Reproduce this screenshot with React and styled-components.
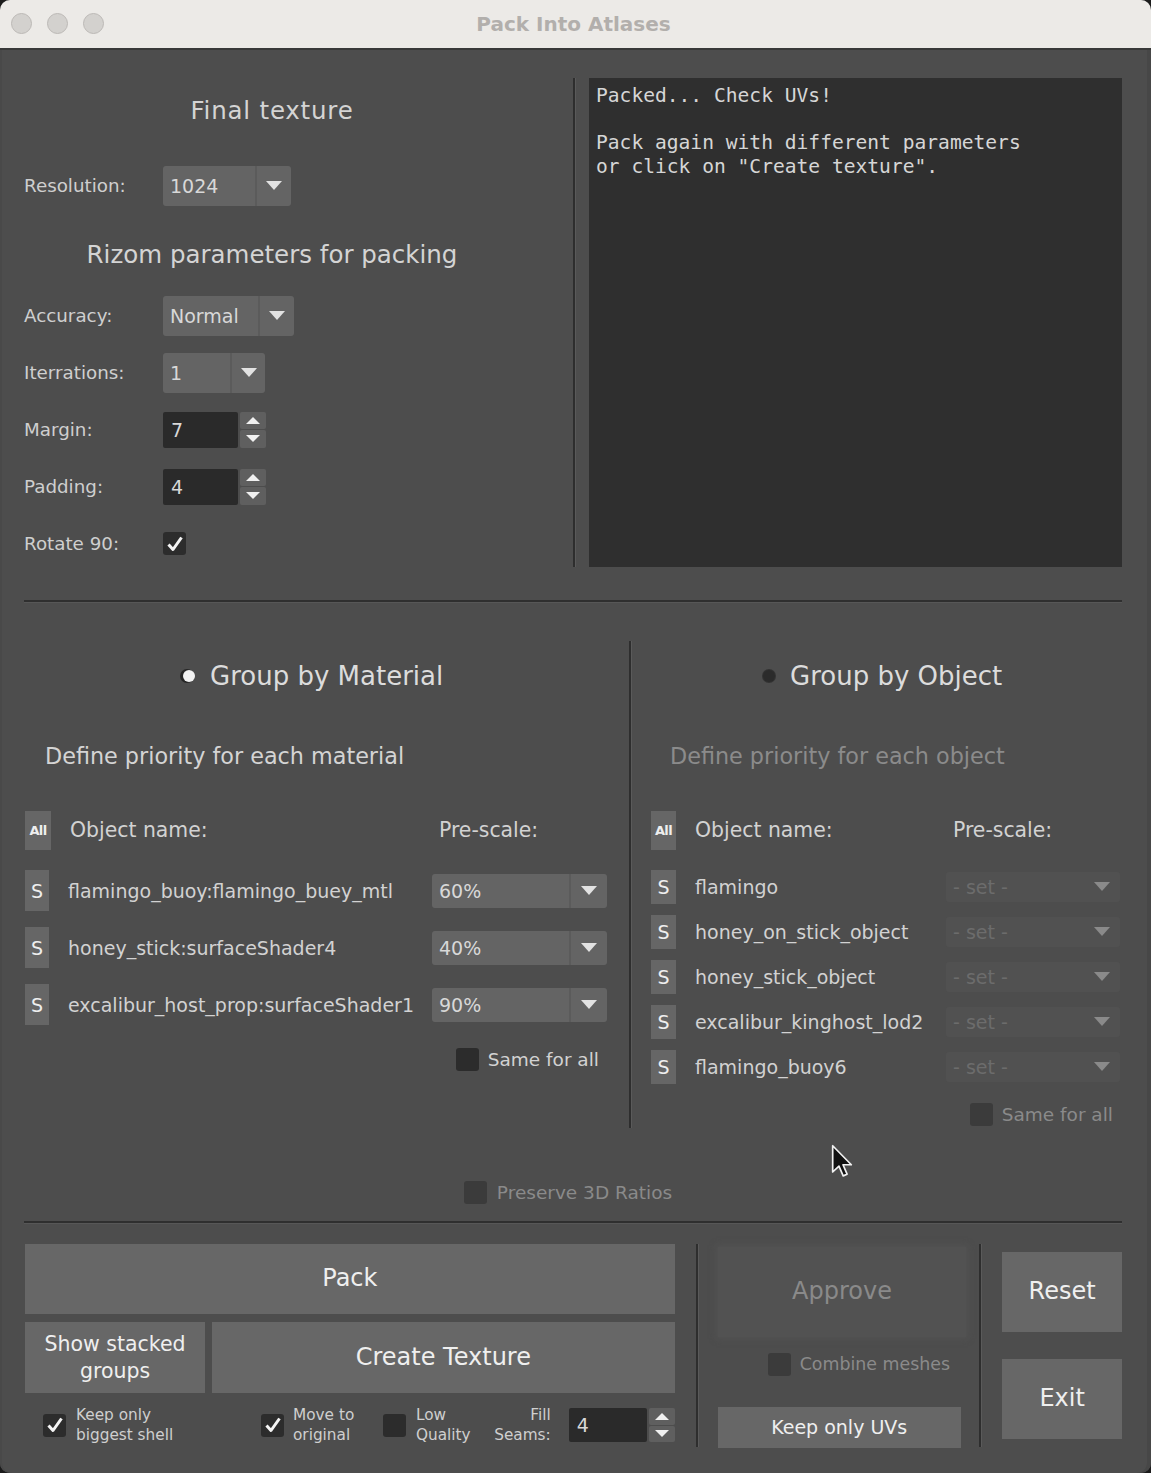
import React from "react";
import styled, { createGlobalStyle } from "styled-components";

const GlobalStyle = createGlobalStyle`
  html, body {
    margin: 0;
    padding: 0;
    background: #1c1c1c;
  }
  body {
    font-family: "DejaVu Sans", "Noto Sans", sans-serif;
    color: #d2d2d2;
  }
`;

const Window = styled.div`
  position: relative;
  width: 1151px;
  height: 1473px;
  background: #4d4d4d;
  border-radius: 10px;
  overflow: hidden;
  display: flex;
  flex-direction: column;
  box-shadow: inset -4px 0 0 #474747, inset 2px 0 0 #494949;
`;

const TitleBar = styled.div`
  position: relative;
  height: 48px;
  flex-shrink: 0;
  background: #eceae7;
  border-bottom: 2px solid #393939;
  display: flex;
  align-items: center;
  justify-content: center;
`;

const Lights = styled.div`
  position: absolute;
  left: 11px;
  top: 13px;
  display: flex;
  gap: 15px;
`;

const Light = styled.span`
  width: 19px;
  height: 19px;
  border-radius: 50%;
  background: #d3d1ce;
  border: 1px solid #bcb9b6;
`;

const Title = styled.div`
  font-weight: bold;
  font-size: 20px;
  color: #b2afac;
  padding-right: 4px;
`;

const Body = styled.div`
  flex: 1;
  display: flex;
  flex-direction: column;
  padding: 28px 29px 0 24px;
`;

/* ---------- top area ---------- */

const Top = styled.div`
  display: flex;
  height: 494px;
  flex-shrink: 0;
`;

const LeftForm = styled.div`
  width: 549px;
  display: flex;
  flex-direction: column;
`;

const Heading = styled.div`
  width: 496px;
  height: 50px;
  flex-shrink: 0;
  margin-top: ${(p) => p.$top}px;
  display: flex;
  align-items: center;
  justify-content: center;
  font-size: 24.5px;
  letter-spacing: ${(p) => p.$ls || 0}px;
  color: #d4d4d4;
`;

const FormRow = styled.div`
  height: 57px;
  flex-shrink: 0;
  margin-top: ${(p) => p.$top || 0}px;
  display: flex;
  align-items: center;
`;

const Label = styled.div`
  width: 139px;
  font-size: 18.3px;
  color: #cfcfcf;
`;

const VSep = styled.div`
  width: 3px;
  flex-shrink: 0;
  height: ${(p) => (p.$h ? `${p.$h}px` : "auto")};
  align-self: ${(p) => (p.$h ? "flex-start" : "stretch")};
  margin: ${(p) => p.$margin || "0"};
  background: linear-gradient(to right, #2e2e2e 0 2px, #5a5a5a 2px);
`;

const Console = styled.div`
  flex: 1;
  height: 489px;
  margin-left: 13px;
  background: #2f2f2f;
  padding: 6px 7px;
  box-sizing: border-box;
  font-family: "DejaVu Sans Mono", "Liberation Mono", monospace;
  font-size: 19.6px;
  line-height: 23.5px;
  color: #d6d6d6;
  white-space: pre;
`;

const HSep = styled.div`
  height: 3px;
  flex-shrink: 0;
  margin-top: ${(p) => p.$top}px;
  background: linear-gradient(to bottom, #2f2f2f 0 2px, #575757 2px);
`;

/* ---------- controls ---------- */

const Dropdown = styled.div`
  width: ${(p) => p.$w}px;
  height: ${(p) => p.$h}px;
  display: flex;
  border-radius: 3px;
  background: ${(p) => (p.$disabled ? "#515151" : "#646464")};
  font-size: ${(p) => p.$fs || 19}px;
  color: ${(p) => (p.$disabled ? "#6c6c6c" : "#d8d8d8")};
`;

const DropValue = styled.div`
  flex: 1;
  display: flex;
  align-items: center;
  padding-left: 7px;
`;

const DropArrow = styled.div`
  width: ${(p) => p.$w || 34}px;
  display: flex;
  align-items: center;
  justify-content: center;
  border-left: 2px solid ${(p) => (p.$disabled ? "#515151" : "#5b5b5b")};
  &::after {
    content: "";
    border-left: 8px solid transparent;
    border-right: 8px solid transparent;
    border-top: 9px solid ${(p) => (p.$disabled ? "#8a8a8a" : "#e2e2e2")};
  }
`;

const Select = ({ value, w, h, fs, arrow, disabled }) => (
  <Dropdown $w={w} $h={h} $fs={fs} $disabled={disabled}>
    <DropValue>{value}</DropValue>
    <DropArrow $w={arrow} $disabled={disabled} />
  </Dropdown>
);

const SpinBox = styled.div`
  display: flex;
  height: ${(p) => p.$h}px;
  gap: 2px;
`;

const SpinInput = styled.div`
  width: ${(p) => p.$w}px;
  background: #2a2a2a;
  border-radius: 2px;
  display: flex;
  align-items: center;
  padding-left: 8px;
  box-sizing: border-box;
  font-size: 19px;
  color: #d8d8d8;
`;

const SpinArrows = styled.div`
  width: 26px;
  display: flex;
  flex-direction: column;
  gap: 1px;
`;

const SpinBtn = styled.div`
  flex: 1;
  background: #5f5f5f;
  border-radius: 2px;
  display: flex;
  align-items: center;
  justify-content: center;
  &::after {
    content: "";
    border-left: 7px solid transparent;
    border-right: 7px solid transparent;
    ${(p) => (p.$up ? "border-bottom" : "border-top")}: 7px solid #f0f0f0;
  }
`;

const Spinner = ({ value, w, h }) => (
  <SpinBox $h={h}>
    <SpinInput $w={w}>{value}</SpinInput>
    <SpinArrows>
      <SpinBtn $up />
      <SpinBtn />
    </SpinArrows>
  </SpinBox>
);

const Box = styled.div`
  width: 23px;
  height: 23px;
  flex-shrink: 0;
  border-radius: 3px;
  background: ${(p) => (p.$disabled ? "#3b3b3b" : "#2c2c2c")};
  display: flex;
  align-items: center;
  justify-content: center;
`;

const Check = ({ checked, disabled }) => (
  <Box $disabled={disabled}>
    {checked && (
      <svg width="18" height="18" viewBox="0 0 18 18">
        <path d="M2.5 9.5 L7 14.5 L15.5 2.5" fill="none" stroke="#f4f4f4" strokeWidth="3" strokeLinejoin="round" />
      </svg>
    )}
  </Box>
);

const CheckLine = styled.div`
  display: flex;
  align-items: center;
  gap: ${(p) => p.$gap || 9}px;
  font-size: ${(p) => p.$fs || 18.5}px;
  color: ${(p) => (p.$disabled ? "#8a8a8a" : "#d2d2d2")};
`;

/* ---------- group columns ---------- */

const Middle = styled.div`
  display: flex;
  height: 487px;
  flex-shrink: 0;
  margin-top: 38px;
`;

const GroupCol = styled.div`
  width: ${(p) => (p.$w ? `${p.$w}px` : "auto")};
  flex: ${(p) => (p.$w ? "none" : 1)};
  display: flex;
  flex-direction: column;
  padding-left: ${(p) => p.$pad}px;
  padding-right: ${(p) => p.$padR || 0}px;
  & > * {
    flex-shrink: 0;
  }
`;

const RadioRow = styled.div`
  height: 70px;
  display: flex;
  align-items: center;
  gap: 15px;
  padding-left: ${(p) => p.$indent}px;
  font-size: 26px;
  color: #dcdcdc;
`;

const Radio = styled.span`
  width: 12px;
  height: 12px;
  border-radius: 50%;
  background: ${(p) => (p.$on ? "#f2f2f2" : "#2b2b2b")};
  box-shadow: ${(p) => (p.$on ? "-2px 0 0 1px #262626" : "0 0 0 1px #333")};
`;

const SubTitle = styled.div`
  height: 90px;
  display: flex;
  align-items: center;
  padding-left: ${(p) => p.$indent}px;
  font-size: 22.3px;
  color: ${(p) => (p.$disabled ? "#8b8b8b" : "#d4d4d4")};
`;

const TableRow = styled.div`
  display: grid;
  grid-template-columns: ${(p) => p.$btn}px 1fr ${(p) => p.$drop}px;
  align-items: center;
  height: ${(p) => p.$h}px;
  margin-top: ${(p) => p.$top || 0}px;
`;

const SmallBtn = styled.div`
  height: ${(p) => p.$h}px;
  background: #666;
  display: flex;
  align-items: center;
  justify-content: center;
  font-size: ${(p) => (p.$all ? 13 : 19)}px;
  font-weight: ${(p) => (p.$all ? "bold" : "normal")};
  letter-spacing: ${(p) => (p.$all ? "-0.6px" : "0")};
  color: #eeeeee;
`;

const NameCell = styled.div`
  padding-left: 19px;
  font-size: ${(p) => p.$fs || 19}px;
  color: #d2d2d2;
  white-space: nowrap;
`;

const HeadCell = styled.div`
  padding-left: 7px;
  font-size: 20.4px;
  color: #d2d2d2;
`;

const SameRow = styled.div`
  height: ${(p) => p.$h}px;
  display: flex;
  align-items: center;
  justify-content: flex-end;
  padding-right: ${(p) => p.$right}px;
`;

const PreserveRow = styled.div`
  height: 58px;
  flex-shrink: 0;
  margin-top: 35px;
  display: flex;
  align-items: center;
  justify-content: center;
  padding-right: 10px;
`;

/* ---------- bottom area ---------- */

const Bottom = styled.div`
  display: flex;
  padding: 20px 0 0 1px;
`;

const BottomLeft = styled.div`
  width: 651px;
  display: flex;
  flex-direction: column;
`;

const BigBtn = styled.div`
  height: ${(p) => p.$h}px;
  width: ${(p) => (p.$w ? `${p.$w}px` : "auto")};
  margin-top: ${(p) => p.$top || 0}px;
  background: ${(p) => (p.$disabled ? "#525252" : "#676767")};
  box-shadow: ${(p) => (p.$disabled ? "0 0 6px 2px #525252" : "none")};
  display: flex;
  align-items: center;
  justify-content: center;
  text-align: center;
  font-size: ${(p) => p.$fs || 24}px;
  line-height: 1.3;
  color: ${(p) => (p.$disabled ? "#8a8a8a" : "#efefef")};
`;

const BtnPair = styled.div`
  display: grid;
  grid-template-columns: 180px 1fr;
  gap: 7px;
  margin-top: 8px;
`;

const Options = styled.div`
  display: flex;
  align-items: center;
  height: 40px;
  margin-top: 12px;
  padding-left: 18px;
`;

const Opt = styled.div`
  width: ${(p) => (p.$w ? `${p.$w}px` : "auto")};
  flex: ${(p) => (p.$w ? "none" : 1)};
`;

const SmallText = styled.div`
  font-size: 15.3px;
  line-height: 20px;
  color: #cfcfcf;
  text-align: ${(p) => (p.$right ? "right" : "left")};
  margin-right: ${(p) => (p.$right ? 18 : 0)}px;
`;

const BottomMid = styled.div`
  width: 249px;
  margin-left: 19px;
  display: flex;
  flex-direction: column;
`;

const CombineRow = styled.div`
  height: 54px;
  display: flex;
  align-items: center;
  padding-left: 50px;
`;

const BottomRight = styled.div`
  width: 120px;
  margin-left: 20px;
  display: flex;
  flex-direction: column;
  gap: 27px;
  padding-top: 8px;
`;

const Cursor = styled.svg`
  position: absolute;
  left: 831px;
  top: 1144px;
`;

const materials = [
  { name: "flamingo_buoy:flamingo_buey_mtl", scale: "60%" },
  { name: "honey_stick:surfaceShader4", scale: "40%" },
  { name: "excalibur_host_prop:surfaceShader1", scale: "90%" },
];

const objects = [
  "flamingo",
  "honey_on_stick_object",
  "honey_stick_object",
  "excalibur_kinghost_lod2",
  "flamingo_buoy6",
];

export default function App() {
  return (
    <>
      <GlobalStyle />
      <Window>
        <TitleBar>
          <Lights>
            <Light />
            <Light />
            <Light />
          </Lights>
          <Title>Pack Into Atlases</Title>
        </TitleBar>

        <Body>
          <Top>
            <LeftForm>
              <Heading $top={7} $ls={0.8}>
                Final texture
              </Heading>
              <FormRow $top={22}>
                <Label>Resolution:</Label>
                <Select value="1024" w={128} h={40} />
              </FormRow>
              <Heading $top={15}>Rizom parameters for packing</Heading>
              <FormRow $top={8}>
                <Label>Accuracy:</Label>
                <Select value="Normal" w={131} h={40} />
              </FormRow>
              <FormRow>
                <Label>Iterrations:</Label>
                <Select value="1" w={102} h={40} arrow={33} />
              </FormRow>
              <FormRow>
                <Label>Margin:</Label>
                <Spinner value="7" w={75} h={36} />
              </FormRow>
              <FormRow>
                <Label>Padding:</Label>
                <Spinner value="4" w={75} h={36} />
              </FormRow>
              <FormRow>
                <Label>Rotate 90:</Label>
                <Check checked />
              </FormRow>
            </LeftForm>
            <VSep $h={489} />
            <Console>{`Packed... Check UVs!

Pack again with different parameters
or click on "Create texture".`}</Console>
          </Top>

          <HSep $top={28} />

          <Middle>
            <GroupCol $w={604} $pad={1}>
              <RadioRow $indent={158}>
                <Radio $on />
                Group by Material
              </RadioRow>
              <SubTitle $indent={20}>Define priority for each material</SubTitle>
              <TableRow $btn={26} $drop={175} $h={40} $top={9} style={{ width: 582 }}>
                <SmallBtn $all $h={39}>All</SmallBtn>
                <NameCell $fs={20.4}>Object name:</NameCell>
                <HeadCell>Pre-scale:</HeadCell>
              </TableRow>
              {materials.map((m, i) => (
                <TableRow key={m.name} $btn={24} $drop={175} $h={57} $top={i === 0 ? 12 : 0} style={{ width: 582 }}>
                  <SmallBtn $h={41}>S</SmallBtn>
                  <NameCell>{m.name}</NameCell>
                  <Select value={m.scale} w={175} h={34} arrow={36} />
                </TableRow>
              ))}
              <SameRow $h={52} $right={30}>
                <CheckLine>
                  <Check />
                  Same for all
                </CheckLine>
              </SameRow>
            </GroupCol>

            <VSep />

            <GroupCol $pad={19} $padR={2}>
              <RadioRow $indent={112}>
                <Radio />
                Group by Object
              </RadioRow>
              <SubTitle $indent={19} $disabled>
                Define priority for each object
              </SubTitle>
              <TableRow $btn={25} $drop={174} $h={40} $top={9}>
                <SmallBtn $all $h={39}>All</SmallBtn>
                <NameCell $fs={20.4}>Object name:</NameCell>
                <HeadCell>Pre-scale:</HeadCell>
              </TableRow>
              {objects.map((o, i) => (
                <TableRow key={o} $btn={25} $drop={174} $h={45} $top={i === 0 ? 14 : 0}>
                  <SmallBtn $h={34}>S</SmallBtn>
                  <NameCell>{o}</NameCell>
                  <Select value="- set -" w={174} h={30} arrow={36} disabled />
                </TableRow>
              ))}
              <SameRow $h={50} $right={7}>
                <CheckLine $disabled>
                  <Check disabled />
                  Same for all
                </CheckLine>
              </SameRow>
            </GroupCol>
          </Middle>

          <PreserveRow>
            <CheckLine $disabled $gap={10}>
              <Check disabled />
              Preserve 3D Ratios
            </CheckLine>
          </PreserveRow>

          <HSep $top={0} />

          <Bottom>
            <BottomLeft>
              <BigBtn $h={70}>Pack</BigBtn>
              <BtnPair>
                <BigBtn $h={71} $fs={20.5}>
                  Show stacked
                  <br />
                  groups
                </BigBtn>
                <BigBtn $h={71}>Create Texture</BigBtn>
              </BtnPair>
              <Options>
                <Opt $w={218}>
                  <CheckLine $gap={10}>
                    <Check checked />
                    <SmallText>
                      Keep only
                      <br />
                      biggest shell
                    </SmallText>
                  </CheckLine>
                </Opt>
                <Opt $w={122}>
                  <CheckLine>
                    <Check checked />
                    <SmallText>
                      Move to
                      <br />
                      original
                    </SmallText>
                  </CheckLine>
                </Opt>
                <Opt>
                  <CheckLine $gap={10}>
                    <Check />
                    <SmallText>
                      Low
                      <br />
                      Quality
                    </SmallText>
                  </CheckLine>
                </Opt>
                <SmallText $right>
                  Fill
                  <br />
                  Seams:
                </SmallText>
                <Spinner value="4" w={78} h={34} />
              </Options>
            </BottomLeft>

            <VSep $h={203} $margin="0 0 0 21px" />

            <BottomMid>
              <BigBtn $h={90} $top={3} $disabled>
                Approve
              </BigBtn>
              <CombineRow>
                <CheckLine $disabled $fs={17.4}>
                  <Check disabled />
                  Combine meshes
                </CheckLine>
              </CombineRow>
              <BigBtn $h={41} $w={243} $top={16} $fs={19}>
                Keep only UVs
              </BigBtn>
            </BottomMid>

            <VSep $h={203} $margin="0 0 0 13px" />

            <BottomRight>
              <BigBtn $h={80}>Reset</BigBtn>
              <BigBtn $h={80}>Exit</BigBtn>
            </BottomRight>
          </Bottom>
        </Body>

        <Cursor width="22" height="34" viewBox="0 0 13 20">
          <path
            d="M1 1 L1 16.5 L4.7 13 L7.2 18.8 L9.5 17.8 L7.1 12.2 L12 12.2 Z"
            fill="#111"
            stroke="#f2f2f2"
            strokeWidth="1"
            strokeLinejoin="round"
          />
        </Cursor>
      </Window>
    </>
  );
}
